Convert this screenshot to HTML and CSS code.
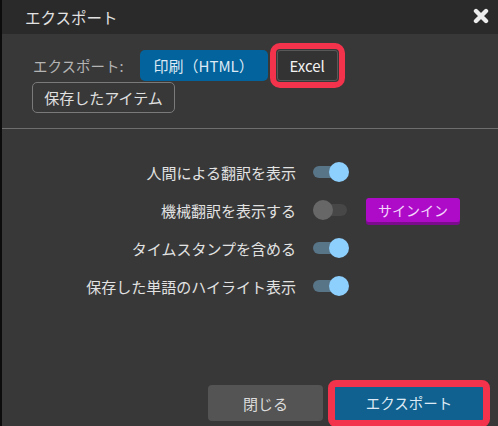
FILE: index.html
```html
<!DOCTYPE html>
<html lang="ja">
<head>
    <meta charset="UTF-8">
    <meta name="viewport" content="width=device-width, initial-scale=1.0">
    <title>エクスポート</title>
    <link rel="stylesheet" href="styles.css">
</head>
<body>
    <div class="dialog">
        <div class="titlebar">
            <span class="title">エクスポート</span>
            <button class="close" aria-label="閉じる">
                <svg width="16" height="16" viewBox="0 0 16 16">
                    <path d="M3 3 L13 13 M13 3 L3 13" stroke="#ececec" stroke-width="4.4" stroke-linecap="round" fill="none"/>
                </svg>
            </button>
        </div>

        <div class="formats">
            <div class="format-row">
                <span class="format-label">エクスポート:</span>
                <button class="btn btn-primary btn-format">印刷（HTML）</button>
                <button class="btn btn-excel marked">Excel</button>
            </div>
            <button class="btn btn-outline">保存したアイテム</button>
        </div>

        <div class="options">
            <span class="option-label">人間による翻訳を表示</span>
            <span class="toggle on"><span class="thumb"></span></span>
            <span></span>

            <span class="option-label">機械翻訳を表示する</span>
            <span class="toggle"><span class="thumb"></span></span>
            <button class="btn btn-signin">サインイン</button>

            <span class="option-label">タイムスタンプを含める</span>
            <span class="toggle on"><span class="thumb"></span></span>
            <span></span>

            <span class="option-label">保存した単語のハイライト表示</span>
            <span class="toggle on"><span class="thumb"></span></span>
            <span></span>
        </div>

        <div class="footer">
            <button class="btn btn-close">閉じる</button>
            <button class="btn btn-export marked">エクスポート</button>
        </div>
    </div>
</body>
</html>
```

FILE: styles.css
```css
* {
    margin: 0;
    padding: 0;
    box-sizing: border-box;
}

body {
    font-family: "Noto Sans CJK JP", "Noto Sans", sans-serif;
    background: #383838;
    color: #e0e0e0;
}

.dialog {
    width: 498px;
    height: 426px;
    background: #383838;
    border-left: 2px solid #0c0c0c;
    display: flex;
    flex-direction: column;
    overflow: hidden;
}

.titlebar {
    height: 34px;
    background: #2a2a2a;
    display: flex;
    align-items: center;
    justify-content: space-between;
    padding: 0 9px 0 23px;
}

.title {
    font-size: 15.5px;
    color: #e2e2e2;
}

.close {
    background: none;
    border: none;
    width: 16px;
    height: 16px;
    display: flex;
    margin-top: -3px;
}

.btn {
    font-family: inherit;
    font-size: 15px;
    border: none;
    border-radius: 5px;
    cursor: pointer;
    line-height: 1;
}

/* format choice */
.formats {
    padding: 16px 0 15px 30px;
    border-bottom: 1px solid #6e6e6e;
}

.format-row {
    display: flex;
    align-items: center;
}

.format-label {
    font-size: 14.5px;
    color: #b4b4b4;
    margin-left: 1px;
}

.btn-format {
    width: 128px;
    height: 31px;
    margin-left: 16px;
}

.btn-primary {
    background: #03639c;
    color: #dde9f4;
}

.btn-excel {
    width: 61px;
    height: 31px;
    margin-left: 9px;
    background: #333333;
    border: 1px solid #585858;
    border-radius: 3px;
    color: #f2f2f2;
}

.marked {
    outline: 6px solid #f2334b;
    outline-offset: 1px;
}

.btn-outline {
    margin-top: 1px;
    width: 143px;
    height: 31px;
    background: transparent;
    border: 1px solid #7a7a7a;
    color: #e0e0e0;
}

/* option list */
.options {
    display: grid;
    grid-template-columns: 294px 36px auto;
    grid-auto-rows: 38px;
    column-gap: 17px;
    align-items: center;
    justify-items: start;
    padding-top: 24px;
}

.option-label {
    justify-self: end;
    font-size: 15px;
    color: #e2e2e2;
}

.toggle {
    position: relative;
    width: 36px;
    height: 20px;
}

.toggle::before {
    content: "";
    position: absolute;
    left: 0;
    right: 2px;
    top: 4px;
    height: 12px;
    border-radius: 6px;
    background: #474747;
}

.toggle .thumb {
    position: absolute;
    top: 0;
    left: 0;
    width: 20px;
    height: 20px;
    border-radius: 50%;
    background: #676767;
}

.toggle.on::before {
    background: #587487;
}

.toggle.on .thumb {
    left: auto;
    right: 0;
    background: #8dcffd;
}

.btn-signin {
    width: 94px;
    height: 24px;
    margin-top: -1px;
    border-radius: 3px;
    background: #ae0bc9;
    box-shadow: 0 3px 0 #7c0b8e;
    color: #f3d8fc;
    font-size: 14px;
}

/* dialog actions */
.footer {
    margin-top: auto;
    display: flex;
    justify-content: flex-end;
    align-items: center;
    gap: 12px;
    padding: 0 15px 5px 0;
}

.btn-close {
    width: 115px;
    height: 36px;
    border-radius: 4px;
    background: #545454;
    color: #dcdcdc;
}

.btn-export {
    width: 148px;
    height: 33px;
    border-radius: 1px;
    background: #10618f;
    color: #dde9f4;
    font-size: 14.5px;
    outline-width: 7px;
    outline-offset: 0;
    margin-top: 1px;
}
```
